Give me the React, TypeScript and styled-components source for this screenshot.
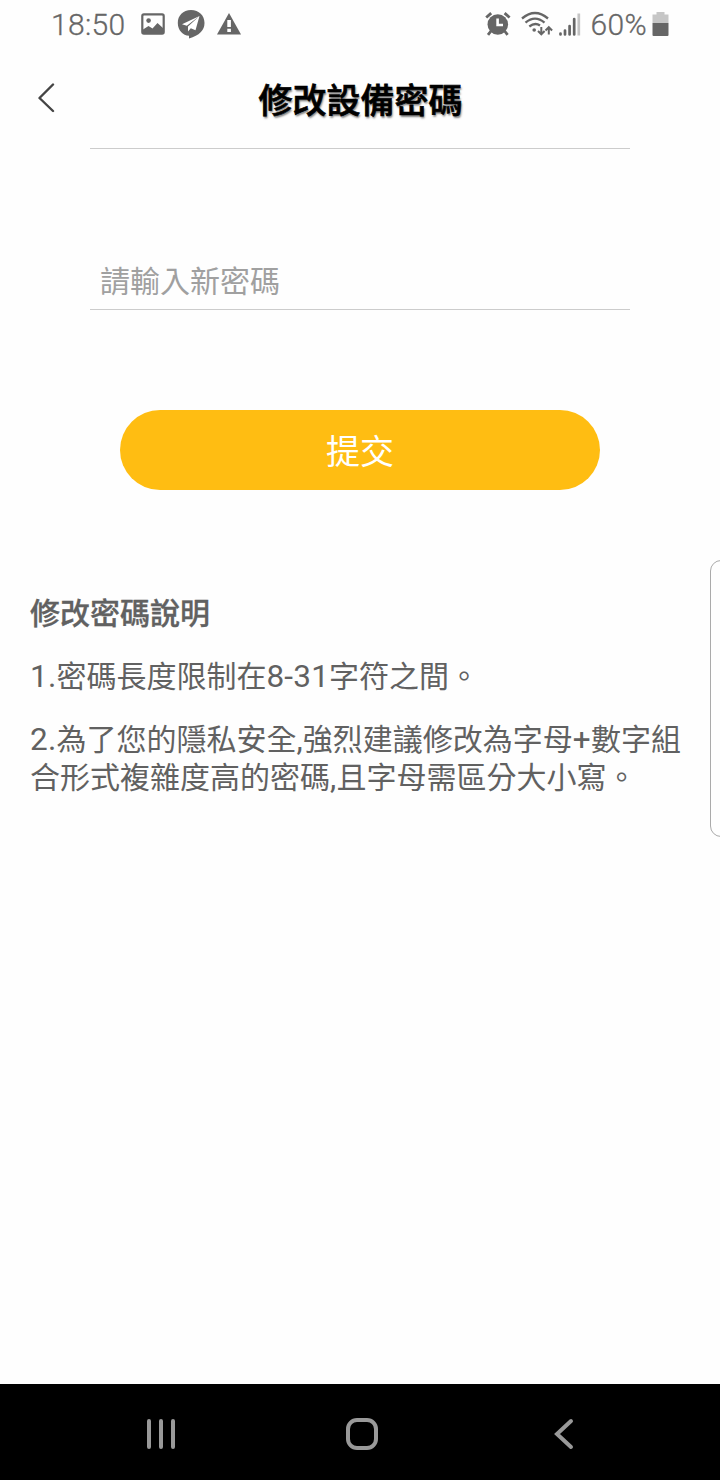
import React from "react";
import styled, { createGlobalStyle } from "styled-components";

const GlobalStyle = createGlobalStyle`
  * { box-sizing: border-box; }
  body {
    margin: 0;
    background: #fff;
    font-family: Roboto, "Noto Sans CJK TC", sans-serif;
  }
`;

const Screen = styled.div`
  position: relative;
  display: flex;
  flex-direction: column;
  width: 720px;
  height: 1480px;
  overflow: hidden;
  background: #fefefe;
`;

const StatusBar = styled.div`
  display: flex;
  justify-content: space-between;
  height: 48px;
  padding: 0 51px 0 51px;
  color: #666;
`;

const StatusGroup = styled.div`
  display: flex;
  align-items: center;
`;

const StatusText = styled.span<{ $width: number; $indent?: number }>`
  width: ${(p) => p.$width}px;
  padding: 2px 0 0 ${(p) => p.$indent ?? 0}px;
  font-size: 30px;
  line-height: 48px;
  font-weight: 300;
  letter-spacing: 0.3px;
  white-space: nowrap;
  -webkit-text-stroke: 0.3px #666;
`;

const StatusIcon = styled.svg<{ $gap?: number }>`
  flex: none;
  display: block;
  margin-left: ${(p) => p.$gap ?? 0}px;
`;

const Header = styled.header`
  display: grid;
  grid-template-columns: 90px 1fr 90px;
  align-items: center;
  height: 100px;
`;

const BackButton = styled.button`
  display: flex;
  width: 90px;
  height: 100px;
  padding: 35px 0 0 36px;
  border: 0;
  background: none;
`;

const Title = styled.h1`
  margin: 0;
  padding: 5px 0 0 1px;
  font-size: 34px;
  line-height: 50px;
  font-weight: 500;
  text-align: center;
  color: #000;
  -webkit-text-stroke: 0.7px #000;
  text-shadow: 1px 2px 2px rgba(0, 0, 0, 0.5);
`;

const Form = styled.form`
  display: flex;
  flex-direction: column;
  margin: 0 90px;
  border-top: 1px solid #ccc;
`;

const PasswordInput = styled.input`
  height: 61px;
  margin-top: 100px;
  padding: 4px 10px 0;
  border: 0;
  border-bottom: 1px solid #ccc;
  outline: 0;
  background: none;
  font: inherit;
  font-size: 30px;
  color: #666;
  &::placeholder { color: #a0a0a0; opacity: 1; }
`;

const SubmitButton = styled.button`
  height: 80px;
  margin: 100px 30px 0;
  padding: 5px 0 0;
  border: 0;
  border-radius: 40px;
  background: #ffbd12;
  color: #fff;
  font: inherit;
  font-size: 34px;
  line-height: 75px;
`;

const Notes = styled.section`
  display: flex;
  flex-direction: column;
  gap: 25px;
  flex: 1;
  padding: 105px 30px 0;
  font-size: 30px;
  line-height: 38px;
  color: #616161;
`;

const NotesTitle = styled.h2`
  margin: 0;
  font-size: inherit;
  font-weight: 500;
  -webkit-text-stroke: 0.3px #616161;
`;

const Note = styled.p`
  margin: 0;
  white-space: nowrap;
`;

const Latin = styled.span`
  font-size: 31.5px;
  letter-spacing: 0.2px;
  line-height: 1;
`;

const EdgePanel = styled.div`
  position: absolute;
  top: 560px;
  right: -12px;
  width: 22px;
  height: 277px;
  border: 1px solid #aaa;
  border-radius: 12px;
`;

const NavBar = styled.nav`
  display: flex;
  justify-content: space-between;
  height: 96px;
  padding: 0 140px 0 143px;
  background: #000;
`;

const NavButton = styled.button`
  display: flex;
  align-items: center;
  justify-content: center;
  width: 36px;
  padding: 4px 0 0;
  border: 0;
  background: none;
`;

export default function App() {
  return (
    <>
      <GlobalStyle />
      <Screen>
        <StatusBar>
          <StatusGroup>
            <StatusText $width={90}>18:50</StatusText>
            <StatusIcon width="24" height="48" viewBox="0 0 24 48">
              <rect x="1.3" y="14.3" width="21.4" height="19.4" rx="1.6" fill="none" stroke="#666" strokeWidth="2.2" />
              <circle cx="7.6" cy="20.6" r="2.3" fill="#666" />
              <path d="M2 29.500l5.500-3.500 4 2.500 5-5.500 6 5.500V34H2z" fill="#666" />
            </StatusIcon>
            <StatusIcon $gap={12} width="28" height="48" viewBox="0 0 28 48">
              <path d="M14 10C6 10 .8 15.600.8 23S6 35.500 12 35.800V38.500Q27.500 34 27.500 23C27.500 15.500 22 10 14 10z" fill="#666" />
              <path d="M22.500 16L5 24.200l4.800 1.600zM22.500 16L11 26.500v5l2.800-3.200 4.700 2z" fill="#fff" />
            </StatusIcon>
            <StatusIcon $gap={12} width="25" height="48" viewBox="0 0 25 48">
              <path d="M12 13L24 34.500H0z" fill="#666" />
              <path d="M10.300 20h3.600v7h-3.600zM10.300 28.800h3.600v3.200h-3.600z" fill="#fff" />
            </StatusIcon>
          </StatusGroup>
          <StatusGroup>
            <StatusIcon width="26" height="48" viewBox="0 0 26 48">
              <circle cx="12.800" cy="24.500" r="10.300" fill="#666" />
              <path d="M1.200 17.500l5-4.400M24.600 17.500l-5-4.400M6 31l-3 3.800M19.600 31l3 3.800" stroke="#666" strokeWidth="2.800" fill="none" />
              <path d="M12.600 18.500v6.500h5.400" stroke="#fff" strokeWidth="2.600" fill="none" />
            </StatusIcon>
            <StatusIcon $gap={10} width="32" height="48" viewBox="0 0 32 48" fill="none" stroke="#666" strokeWidth="2.300">
              <path d="M1 18.500Q14 7.500 27 18.500M4.500 22.700Q14 14.500 23.500 22.700M8.300 26.500Q14 22 19 25.500" />
              <circle cx="13.200" cy="30" r="1.800" fill="#666" stroke="none" />
              <path d="M20.300 27v7M17 31l3.300 3.300 3.300-3.300M27.800 34.500v-7M24.500 30.500l3.300-3.300 3.300 3.300" strokeWidth="2" />
            </StatusIcon>
            <StatusIcon $gap={5} width="23" height="48" viewBox="0 0 23 48">
              <path d="M2.500 33.500v1M7 30.500v4M11.600 26v8.500M16.200 19v15.500" stroke="#666" strokeWidth="2.700" strokeLinecap="round" />
              <path d="M20.800 13.500v22" stroke="#c4c4c4" strokeWidth="2.700" />
            </StatusIcon>
            <StatusText $width={70} $indent={9.5}>60%</StatusText>
            <StatusIcon $gap={1} width="17" height="48" viewBox="0 0 17 48">
              <path d="M4.500 12h8v2.500H16.500V23H.5v-8.500h4z" fill="#c6c6c6" />
              <path d="M.5 23h16v12q0 1-1 1h-14q-1 0-1-1z" fill="#666" />
            </StatusIcon>
          </StatusGroup>
        </StatusBar>

        <Header>
          <BackButton type="button" aria-label="返回">
            <svg width="20" height="30" viewBox="0 0 20 30" fill="none" stroke="#444" strokeWidth="2.4" strokeLinecap="round" strokeLinejoin="round">
              <path d="M17 1.500L3.500 15 17 28" />
            </svg>
          </BackButton>
          <Title>修改設備密碼</Title>
        </Header>

        <Form onSubmit={(e) => e.preventDefault()}>
          <PasswordInput placeholder="請輸入新密碼" />
          <SubmitButton type="submit">提交</SubmitButton>
        </Form>

        <Notes>
          <NotesTitle>修改密碼說明</NotesTitle>
          <Note>
            <Latin>1.</Latin>密碼長度限制在<Latin>8-31</Latin>字符之間。
          </Note>
          <Note>
            <Latin>2.</Latin>為了您的隱私安全<Latin>,</Latin>強烈建議修改為字母<Latin>+</Latin>數字組
            <br />
            合形式複雜度高的密碼<Latin>,</Latin>且字母需區分大小寫。
          </Note>
        </Notes>

        <EdgePanel />

        <NavBar>
          <NavButton type="button" aria-label="最近">
            <svg width="36" height="36" viewBox="0 0 36 36" stroke="#999" strokeWidth="4" strokeLinecap="round">
              <path d="M6 5v26M18 5v26M30 5v26" />
            </svg>
          </NavButton>
          <NavButton type="button" aria-label="主畫面">
            <svg width="36" height="36" viewBox="0 0 36 36" fill="none" stroke="#999" strokeWidth="4">
              <rect x="4" y="4" width="28" height="28" rx="9" />
            </svg>
          </NavButton>
          <NavButton type="button" aria-label="返回">
            <svg width="36" height="36" viewBox="0 0 36 36" fill="none" stroke="#999" strokeWidth="4" strokeLinecap="round">
              <path d="M27 5L13 18l14 13" />
            </svg>
          </NavButton>
        </NavBar>
      </Screen>
    </>
  );
}
